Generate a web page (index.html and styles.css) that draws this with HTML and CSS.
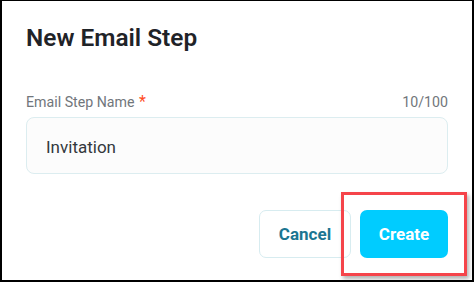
FILE: index.html
```html
<!DOCTYPE html>
<html>
<head>
<meta charset="utf-8">
<link rel="stylesheet" href="styles.css">
</head>
<body>
<div class="frame">
  <h1 class="title">New Email Step</h1>
  <div class="field">
    <div class="field-head">
      <label class="label">Email Step Name <span class="req">*</span></label>
      <span class="count">10/100</span>
    </div>
    <div class="input">Invitation</div>
  </div>
  <div class="actions">
    <button class="btn btn-cancel">Cancel</button>
    <button class="btn btn-create">Create</button>
    <div class="highlight"></div>
  </div>
</div>
</body>
</html>
```
FILE: styles.css
```css
html, body { margin: 0; padding: 0; background: #fff; }
body { width: 474px; height: 282px; overflow: hidden; }
.frame {
  box-sizing: border-box;
  width: 474px;
  height: 282px;
  border-top: 1px solid #000;
  border-left: 2px solid #000;
  border-right: 2px solid #000;
  border-bottom: 2px solid #000;
  padding: 0 24px 0 24px;
  font-family: Roboto, "Noto Sans", sans-serif;
  display: flex;
  flex-direction: column;
}
.title {
  margin: 22px 0 0 0;
  font-size: 24.4px;
  line-height: 30px;
  font-weight: 600;
  color: #1f2328;
}
.field { margin-top: 41px; }
.field-head {
  display: flex;
  justify-content: space-between;
  align-items: baseline;
  height: 16px;
  line-height: 16px;
}
.label { font-size: 14.2px; color: #71767b; }
.req { color: #ff4d1f; font-size: 16px; margin-left: 1px; }
.count { font-size: 14.2px; color: #71767b; }
.input {
  margin-top: 7px;
  box-sizing: border-box;
  height: 57px;
  border: 1px solid #dcedf0;
  border-radius: 8px;
  background: #fcfcfc;
  padding-left: 19px;
  padding-top: 2px;
  display: flex;
  align-items: center;
  font-size: 17px;
  color: #33383d;
}
.actions {
  position: relative;
  margin-top: 36px;
  display: flex;
  justify-content: flex-end;
  gap: 9px;
}
.btn {
  box-sizing: border-box;
  height: 48px;
  border-radius: 7px;
  font-family: Roboto, "Noto Sans", sans-serif;
  font-size: 17px;
  font-weight: 700;
  cursor: pointer;
}
.btn-cancel {
  width: 92px;
  background: #fff;
  border: 1px solid #d7ecf0;
  color: #1b7591;
}
.btn-create {
  width: 88px;
  background: #00ccff;
  border: none;
  color: #fff;
}
.highlight {
  position: absolute;
  right: -19px;
  top: -18px;
  width: 126px;
  height: 84px;
  box-sizing: border-box;
  border: 3px solid #f5444a;
  box-shadow: 2px 3px 4px rgba(0,0,0,0.3);
  pointer-events: none;
}
```
